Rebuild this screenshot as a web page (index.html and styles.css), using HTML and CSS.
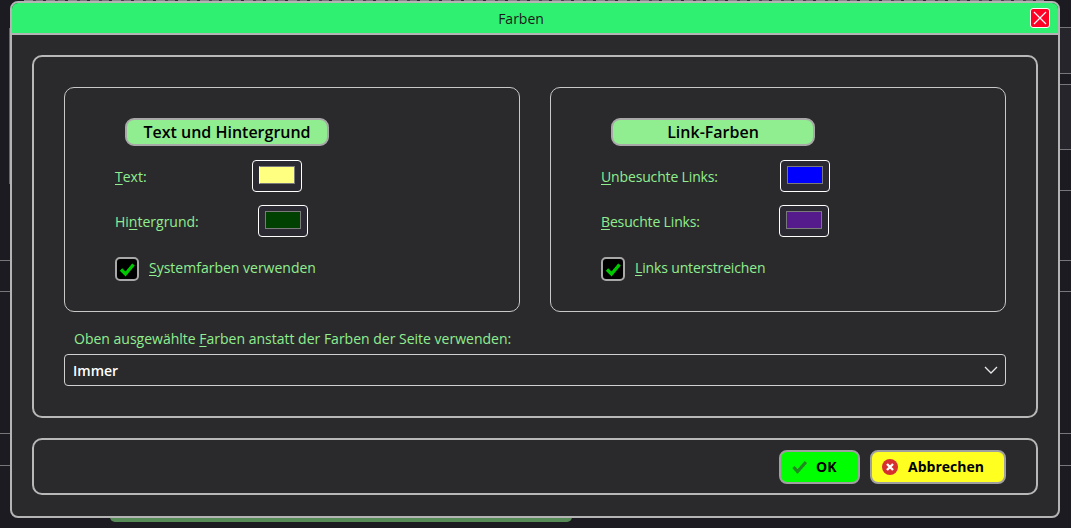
FILE: index.html
```html
<!DOCTYPE html>
<html lang="de">
<head>
    <meta charset="UTF-8">
    <meta name="viewport" content="width=device-width, initial-scale=1.0">
    <title>Farben</title>
    <link rel="stylesheet" href="styles.css">
</head>
<body>
    <!-- Seite hinter dem Dialog -->
    <div class="backdrop">
        <div class="bg-strip"></div>
        <div class="bg-line line-a"></div>
        <div class="bg-line line-b"></div>
        <div class="bg-line line-c"></div>
        <div class="bg-line line-d"></div>
        <div class="bg-side side-a"></div>
        <div class="bg-side side-b"></div>
        <div class="bg-side side-c"></div>
        <div class="bg-side side-d"></div>
        <div class="bg-left"></div>
        <div class="bg-bar"></div>
    </div>

    <div class="dialog">
        <div class="titlebar">
            <span class="title">Farben</span>
            <button class="close-btn" aria-label="Schließen">
                <svg width="18" height="18" viewBox="0 0 18 18"><path d="M3 3L15 15M15 3L3 15" stroke="#fff" stroke-width="1.2" fill="none"/></svg>
            </button>
        </div>

        <div class="content">
            <div class="group main-group">
                <div class="columns">
                    <div class="box">
                        <div class="pill">Text und Hintergrund</div>
                        <div class="color-row">
                            <label class="color-label w-text"><u>T</u>ext:</label>
                            <button class="swatch-btn"><span class="swatch swatch-text"></span></button>
                        </div>
                        <div class="color-row">
                            <label class="color-label w-bg">Hi<u>n</u>tergrund:</label>
                            <button class="swatch-btn"><span class="swatch swatch-bg"></span></button>
                        </div>
                        <div class="check-row">
                            <span class="checkbox">
                                <svg width="18" height="18" viewBox="0 0 18 18"><path d="M3 9.5L7.5 14L15.5 4.5" fill="none" stroke="#00c800" stroke-width="3.4"/></svg>
                            </span>
                            <label class="check-label"><u>S</u>ystemfarben verwenden</label>
                        </div>
                    </div>

                    <div class="box box-links">
                        <div class="pill">Link-Farben</div>
                        <div class="color-row">
                            <label class="color-label w-unvisited"><u>U</u>nbesuchte Links:</label>
                            <button class="swatch-btn"><span class="swatch swatch-unvisited"></span></button>
                        </div>
                        <div class="color-row">
                            <label class="color-label w-visited"><u>B</u>esuchte Links:</label>
                            <button class="swatch-btn"><span class="swatch swatch-visited"></span></button>
                        </div>
                        <div class="check-row">
                            <span class="checkbox">
                                <svg width="18" height="18" viewBox="0 0 18 18"><path d="M3 9.5L7.5 14L15.5 4.5" fill="none" stroke="#00c800" stroke-width="3.4"/></svg>
                            </span>
                            <label class="check-label"><u>L</u>inks unterstreichen</label>
                        </div>
                    </div>
                </div>

                <label class="select-label">Oben ausgewählte <u>F</u>arben anstatt der Farben der Seite verwenden:</label>
                <div class="select">
                    <span>Immer</span>
                    <svg width="14" height="8" viewBox="0 0 14 8"><path d="M1 1L7 7L13 1" stroke="#e8e8e8" stroke-width="1.3" fill="none"/></svg>
                </div>
            </div>

            <div class="group footer-group">
                <button class="btn btn-ok">
                    <svg width="15" height="14" viewBox="0 0 15 14"><path d="M1.5 7L5.5 11.5L14 2" fill="none" stroke="#1f8a1f" stroke-width="3.2"/></svg>
                    OK
                </button>
                <button class="btn btn-cancel">
                    <svg width="16" height="16" viewBox="0 0 16 16"><circle cx="8" cy="8" r="8" fill="#d62f2f"/><path d="M5 5L11 11M11 5L5 11" stroke="#fff" stroke-width="2.4"/></svg>
                    Abbrechen
                </button>
            </div>
        </div>
    </div>
</body>
</html>
```

FILE: styles.css
```css
* {
    margin: 0;
    padding: 0;
    box-sizing: border-box;
}

body {
    width: 1071px;
    height: 528px;
    overflow: hidden;
    position: relative;
    background-color: #1c1b22;
    font-family: "Open Sans", "Noto Sans", sans-serif;
    font-size: 14px;
}

u {
    text-underline-offset: 2px;
}

button {
    font-family: inherit;
}

/* Hintergrund */
.backdrop div {
    position: absolute;
}

.bg-strip {
    top: 0;
    left: 24px;
    width: 1020px;
    height: 1px;
    background: repeating-linear-gradient(90deg, #8a8a8e 0 9px, #45454a 9px 12px, #77777b 12px 19px, #2c2c30 19px 22px);
}

.bg-line {
    left: 0;
    width: 1071px;
    height: 1px;
    background: #77777a;
}

.line-a { top: 260px; }
.line-b { top: 291px; }
.line-c { top: 433px; }
.line-d { top: 465px; }

.bg-side {
    left: 1060px;
    width: 11px;
    height: 1px;
    background: #77777a;
}

.side-a { top: 27px; height: 46px; background: #26252b; border-top: 1px solid #77777a; }
.side-b { top: 73px; height: 12px; background: none; border-top: 1px solid #77777a; border-bottom: 1px solid #77777a; }
.side-c { top: 85px; height: 65px; background: #26252b; border-bottom: 1px solid #77777a; }
.side-d { top: 190px; }

.bg-left {
    top: 28px;
    left: 9px;
    width: 1px;
    height: 156px;
    background: #66666a;
}

.bg-bar {
    top: 517px;
    left: 110px;
    width: 462px;
    height: 5px;
    background: #568a56;
    border-radius: 0 0 6px 6px;
}

/* Dialog */
.dialog {
    position: absolute;
    top: 1px;
    left: 10px;
    width: 1050px;
    height: 517px;
    background: #2a2a2c;
    border: 2px solid #b4b4b4;
    border-radius: 8px;
    overflow: hidden;
}

.titlebar {
    height: 32px;
    display: flex;
    align-items: center;
    justify-content: center;
    position: relative;
    padding-right: 28px;
    background: #2ff070;
    border-bottom: 2px solid #b4b4b4;
    color: #1a1a1a;
}

.title {
    margin-top: 1px;
}

.close-btn {
    position: absolute;
    top: 5px;
    right: 8px;
    width: 20px;
    height: 20px;
    display: flex;
    align-items: center;
    justify-content: center;
    background: #ff0026;
    border: 1px solid #fff;
    border-radius: 3px;
}

.content {
    padding: 20px 20px 0;
}

.group {
    border: 2px solid #b8b8b8;
    border-radius: 10px;
}

.main-group {
    height: 363px;
    padding: 30px;
}

.columns {
    display: flex;
    gap: 30px;
}

.box {
    width: 456px;
    height: 225px;
    padding: 30px 0 0 50px;
    border: 1px solid #c8c8c8;
    border-radius: 10px;
}

.box-links label {
    letter-spacing: -0.15px;
}

.pill {
    width: 204px;
    height: 28px;
    margin-left: 10px;
    display: flex;
    align-items: center;
    justify-content: center;
    background: #90ee90;
    border: 2px solid #a8a8a8;
    border-radius: 9px;
    color: #000;
    font-size: 16px;
    font-weight: 600;
}

.color-row {
    display: flex;
    align-items: center;
    margin-top: 13px;
}

.pill + .color-row {
    margin-top: 14px;
}

.color-label,
.check-label,
.select-label {
    color: #90ee90;
}

.w-text { width: 137px; }
.w-bg { width: 143px; }
.w-unvisited { width: 179px; }
.w-visited { width: 178px; }

.swatch-btn {
    width: 50px;
    height: 32px;
    display: flex;
    align-items: center;
    justify-content: center;
    background: #2b2a33;
    border: 1px solid #fff;
    border-radius: 4px;
}

.swatch {
    display: block;
    width: 36px;
    height: 18px;
    margin-top: -2px;
    border: 1px solid #7a7a7a;
}

.swatch-text {
    background: #ffff80;
    border-left-color: #fff;
}

.swatch-bg { background: #004000; }
.swatch-unvisited { background: #0000ff; }
.swatch-visited { background: #551a8b; }

.check-row {
    display: flex;
    align-items: center;
    gap: 10px;
    margin-top: 20px;
}

.checkbox {
    width: 24px;
    height: 24px;
    display: flex;
    align-items: center;
    justify-content: center;
    background: #000;
    border: 2px solid #a8a8a8;
    border-radius: 5px;
}

.check-label {
    margin-top: -3px;
}

.select-label {
    display: block;
    margin: 17px 0 5px 10px;
    line-height: 20px;
}

.select {
    height: 32px;
    display: flex;
    align-items: center;
    justify-content: space-between;
    padding: 0 7px 0 8px;
    border: 1px solid #d0d0d0;
    border-radius: 4px;
    color: #fff;
    font-weight: 600;
}

.footer-group {
    height: 57px;
    margin-top: 20px;
    padding-right: 30px;
    display: flex;
    align-items: center;
    justify-content: flex-end;
    gap: 10px;
}

.btn {
    height: 34px;
    display: flex;
    align-items: center;
    border: 2px solid #a0a0a0;
    border-radius: 8px;
    color: #000;
    font-size: 14px;
    font-weight: 700;
}

.btn-ok {
    width: 81px;
    gap: 9px;
    padding-left: 11px;
    background: #00ff00;
}

.btn-cancel {
    width: 136px;
    gap: 10px;
    padding-left: 10px;
    background: #ffff20;
}
```
